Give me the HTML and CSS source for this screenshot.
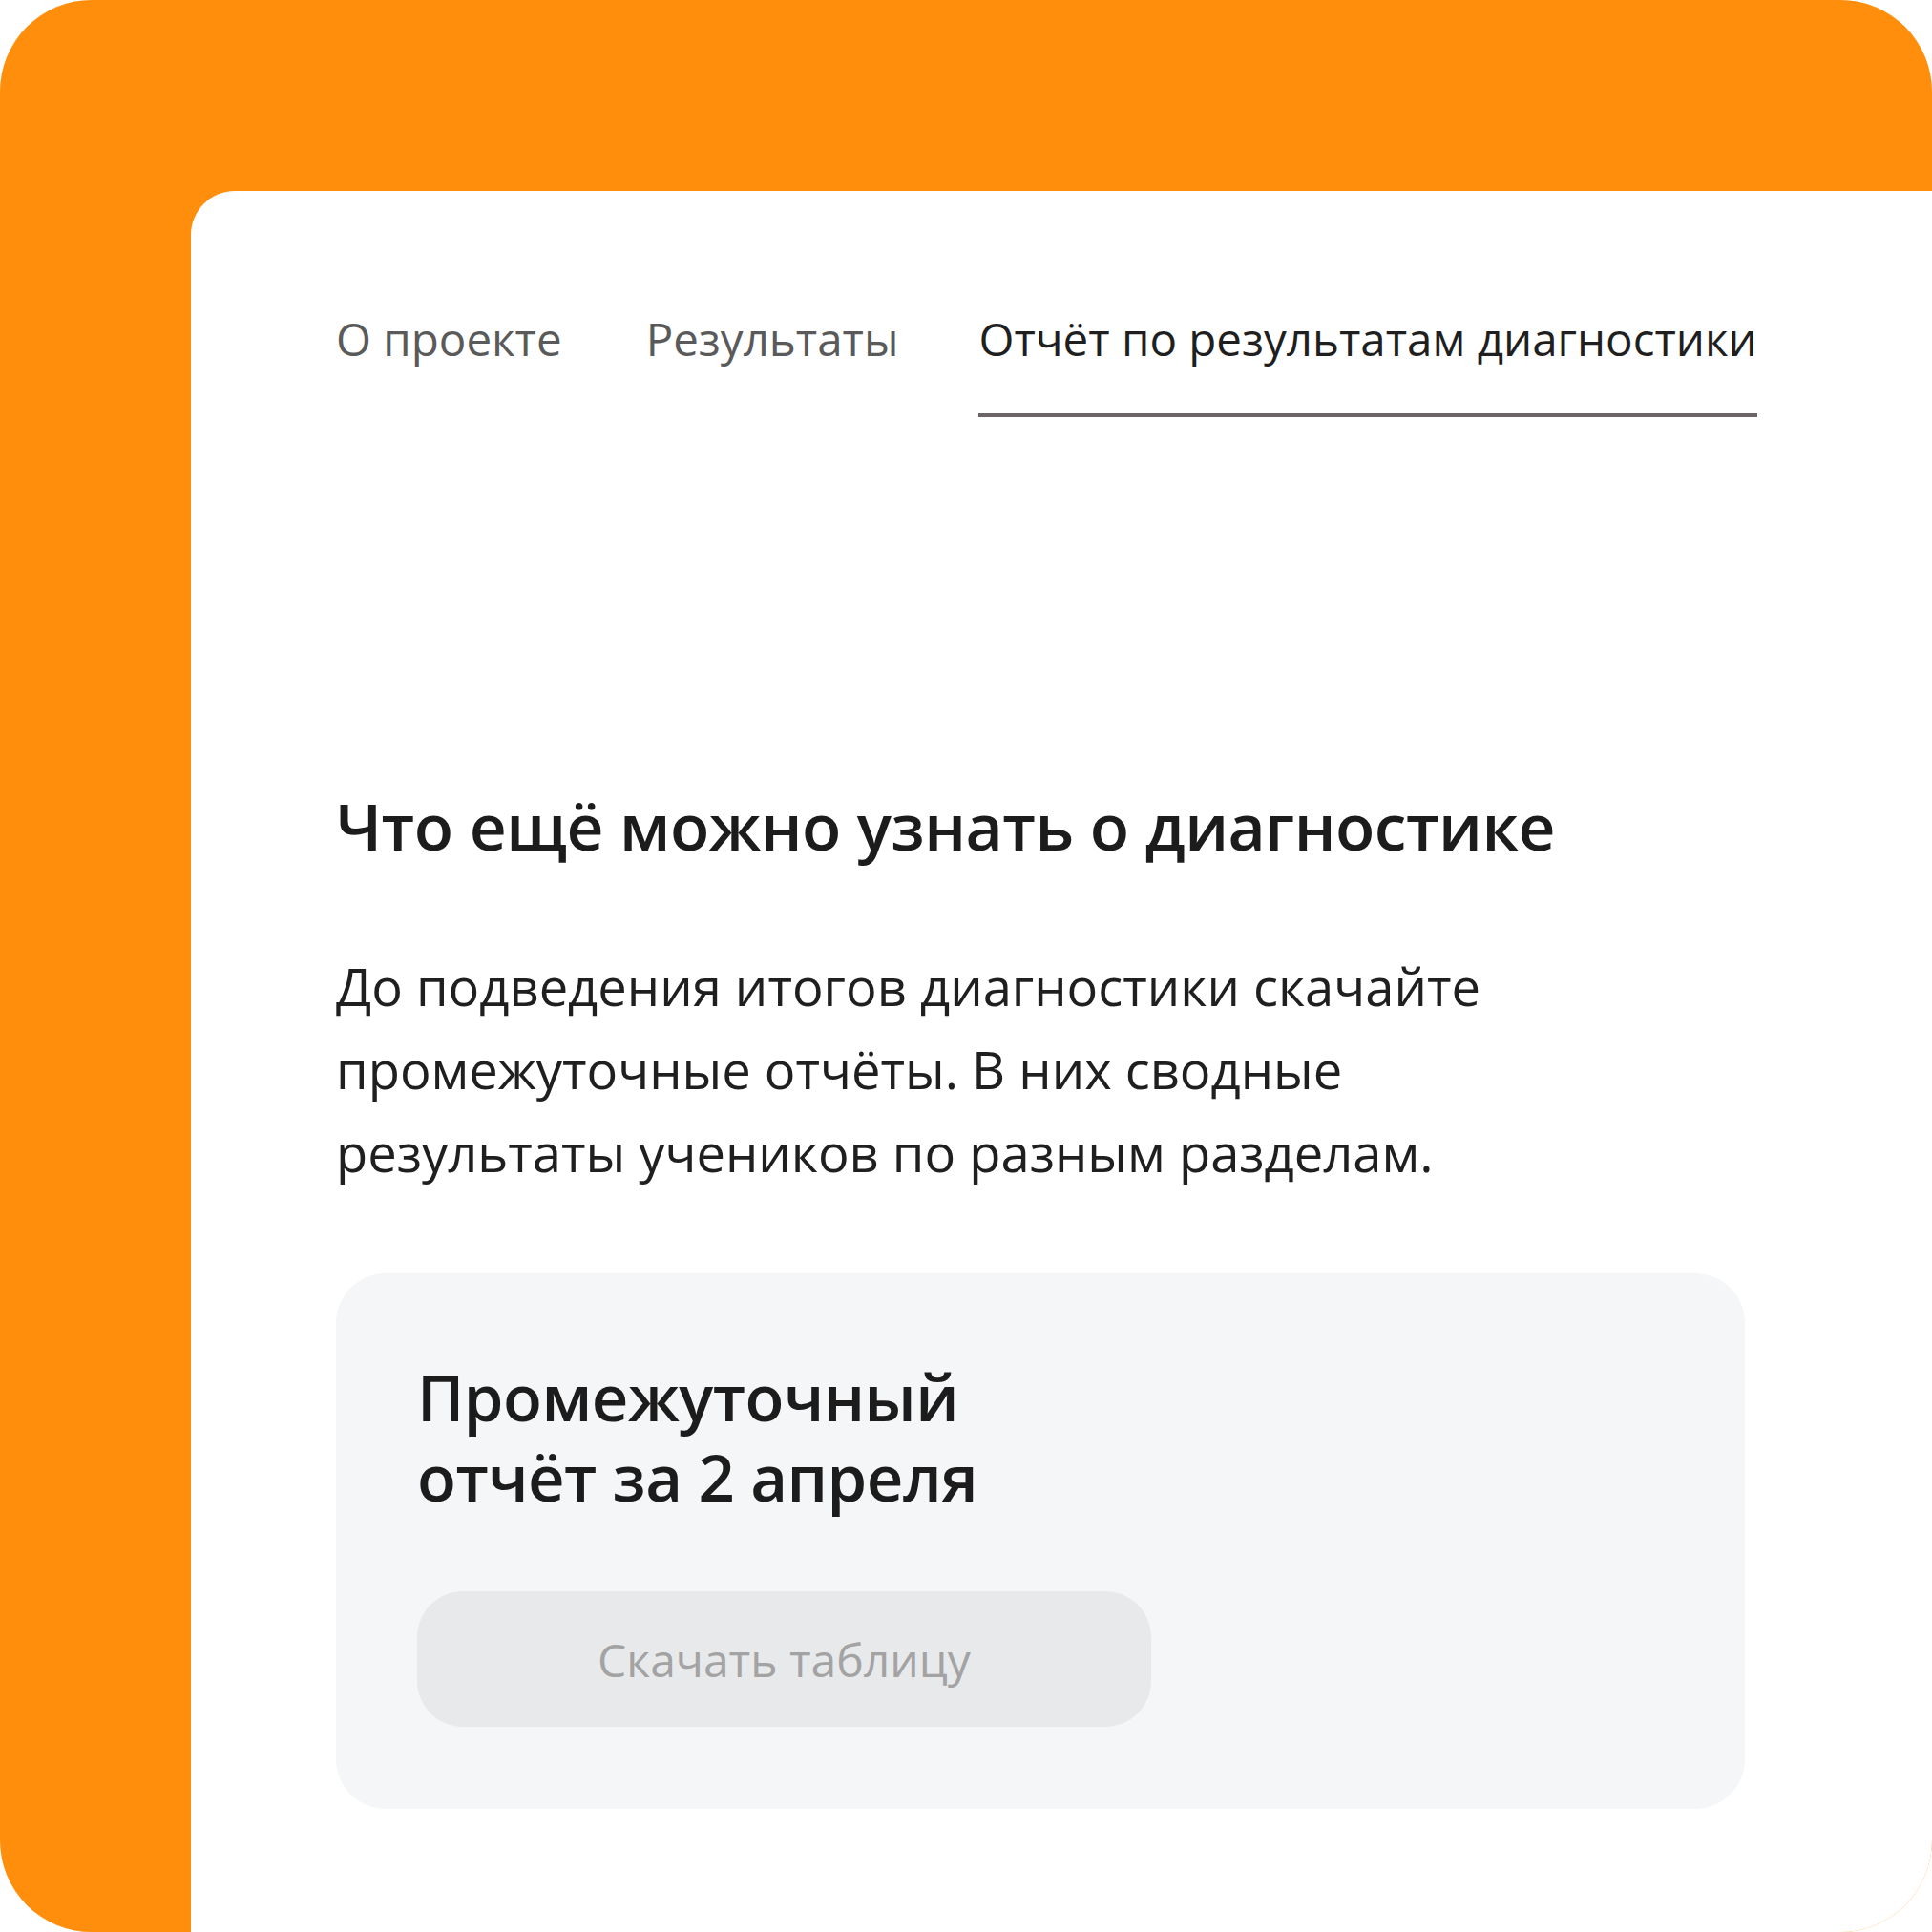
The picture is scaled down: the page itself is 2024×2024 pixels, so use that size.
FILE: index.html
```html
<!DOCTYPE html>
<html lang="ru">
<head>
<meta charset="utf-8">
<title>Отчёт по результатам диагностики</title>
<link rel="stylesheet" href="styles.css">
</head>
<body>
<div class="frame">
  <main class="panel">
    <nav class="tabs">
      <a class="tab">О проекте</a>
      <a class="tab">Результаты</a>
      <a class="tab tab-active">Отчёт по результатам диагностики</a>
    </nav>
    <h1 class="title">Что ещё можно узнать о диагностике</h1>
    <p class="lead">До подведения итогов диагностики скачайте<br>промежуточные отчёты. В них сводные<br>результаты учеников по разным разделам.</p>
    <section class="card">
      <h2 class="card-title">Промежуточный<br>отчёт за 2 апреля</h2>
      <button class="btn" type="button">Скачать таблицу</button>
    </section>
  </main>
</div>
</body>
</html>
```
FILE: styles.css
```css
html, body {
  margin: 0;
  padding: 0;
  background: #ffffff;
}
body {
  font-family: "Open Sans", "Noto Sans", sans-serif;
  color: #1f1f1f;
}
.frame {
  width: 2024px;
  height: 2024px;
  box-sizing: border-box;
  background: #ff8e0c;
  border-radius: 96px;
  overflow: hidden;
  padding: 200px 0 0 200px;
  display: flex;
}
.panel {
  flex: 1;
  background: #ffffff;
  border-top-left-radius: 46px;
  padding-left: 152px;
  display: flex;
  flex-direction: column;
  align-items: flex-start;
}
.tabs {
  display: flex;
  margin-top: 123px;
}
.tab {
  font-size: 47.5px;
  line-height: 64px;
  color: #5a5a5a;
  padding-bottom: 46px;
  border-bottom: 4px solid transparent;
  white-space: nowrap;
  margin-right: 88px;
}
.tab-active {
  color: #1f1f1f;
  border-bottom-color: #6b6567;
  margin-left: -4px;
  margin-right: 0;
}
.title {
  margin: 386px 0 0 0;
  font-size: 67.7px;
  line-height: 84px;
  font-weight: 600;
  color: #1c1c1c;
  letter-spacing: -0.5px;
}
.lead {
  margin: 83px 0 0 0;
  font-size: 54.3px;
  line-height: 87px;
  color: #1f1f1f;
}
.card {
  margin-top: 83px;
  width: 1476px;
  height: 561px;
  box-sizing: border-box;
  background: #f5f6f8;
  border-radius: 52px;
  padding: 87px 0 0 85px;
  display: flex;
  flex-direction: column;
  align-items: flex-start;
}
.card-title {
  margin: 0;
  font-size: 67px;
  line-height: 84px;
  font-weight: 600;
  color: #1c1c1c;
  letter-spacing: -0.5px;
}
.btn {
  margin-top: 78px;
  width: 769px;
  height: 142px;
  border: none;
  border-radius: 48px;
  background: #e8e9eb;
  color: #a3a3a3;
  font-family: inherit;
  font-size: 48px;
  padding: 0;
}
```
